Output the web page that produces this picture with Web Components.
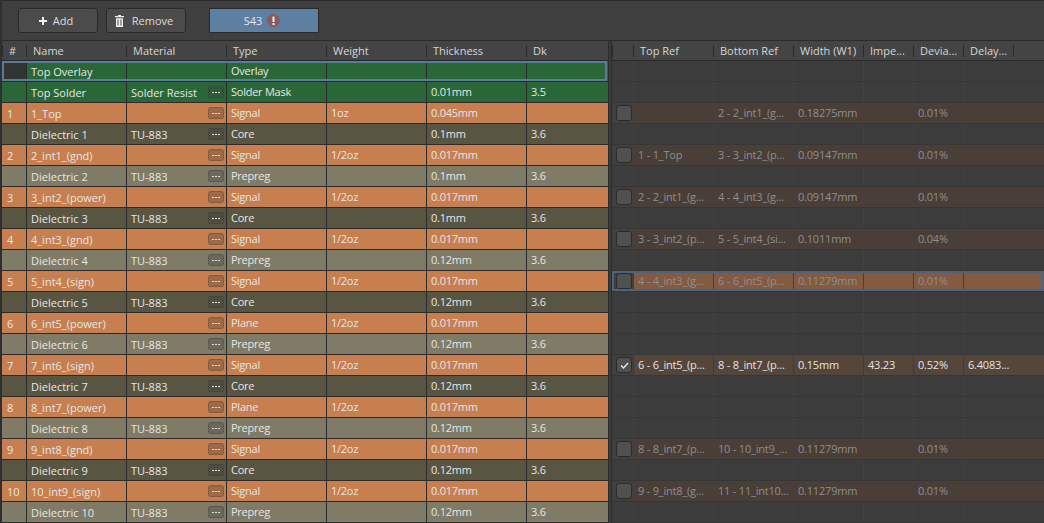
<!DOCTYPE html>
<html>
<head>
<meta charset="utf-8">
<style>
	html, body { margin: 0; height: 100%; background: #3c3c3c; overflow: hidden; }
	body { font: 11px "Open Sans", "Liberation Sans", sans-serif; color: #e4e4e4; }
</style>
</head>
<body>
<stack-app></stack-app>
<script>
const LEFT_COLS = '24px 100px 100px 100px 100px 100px 82px'
const RIGHT_HEAD_COLS = '21px 80px 80px 70px 50px 50px 50px 1fr'
const RIGHT_COLS = '21px 80px 80px 70px 50px 50px 1fr'

const LAYERS = [
	{kind: 'green', sel: true, cells: ['', 'Top Overlay', '', 'Overlay', '', '', '']},
	{kind: 'green', cells: ['', 'Top Solder', 'Solder Resist', 'Solder Mask', '', '0.01mm', '3.5'], more: true},
	{kind: 'copper', cells: ['1', '1_Top', '', 'Signal', '1oz', '0.045mm', ''], more: true},
	{kind: 'core', cells: ['', 'Dielectric 1', 'TU-883', 'Core', '', '0.1mm', '3.6'], more: true},
	{kind: 'copper', cells: ['2', '2_int1_(gnd)', '', 'Signal', '1/2oz', '0.017mm', ''], more: true},
	{kind: 'prepreg', cells: ['', 'Dielectric 2', 'TU-883', 'Prepreg', '', '0.1mm', '3.6'], more: true},
	{kind: 'copper', cells: ['3', '3_int2_(power)', '', 'Signal', '1/2oz', '0.017mm', ''], more: true},
	{kind: 'core', cells: ['', 'Dielectric 3', 'TU-883', 'Core', '', '0.1mm', '3.6'], more: true},
	{kind: 'copper', cells: ['4', '4_int3_(gnd)', '', 'Signal', '1/2oz', '0.017mm', ''], more: true},
	{kind: 'prepreg', cells: ['', 'Dielectric 4', 'TU-883', 'Prepreg', '', '0.12mm', '3.6'], more: true},
	{kind: 'copper', cells: ['5', '5_int4_(sign)', '', 'Signal', '1/2oz', '0.017mm', ''], more: true},
	{kind: 'core', cells: ['', 'Dielectric 5', 'TU-883', 'Core', '', '0.12mm', '3.6'], more: true},
	{kind: 'copper', cells: ['6', '6_int5_(power)', '', 'Plane', '1/2oz', '0.017mm', ''], more: true},
	{kind: 'prepreg', cells: ['', 'Dielectric 6', 'TU-883', 'Prepreg', '', '0.12mm', '3.6'], more: true},
	{kind: 'copper', cells: ['7', '7_int6_(sign)', '', 'Signal', '1/2oz', '0.017mm', ''], more: true},
	{kind: 'core', cells: ['', 'Dielectric 7', 'TU-883', 'Core', '', '0.12mm', '3.6'], more: true},
	{kind: 'copper', cells: ['8', '8_int7_(power)', '', 'Plane', '1/2oz', '0.017mm', ''], more: true},
	{kind: 'prepreg', cells: ['', 'Dielectric 8', 'TU-883', 'Prepreg', '', '0.12mm', '3.6'], more: true},
	{kind: 'copper', cells: ['9', '9_int8_(gnd)', '', 'Signal', '1/2oz', '0.017mm', ''], more: true},
	{kind: 'core', cells: ['', 'Dielectric 9', 'TU-883', 'Core', '', '0.12mm', '3.6'], more: true},
	{kind: 'copper', cells: ['10', '10_int9_(sign)', '', 'Signal', '1/2oz', '0.017mm', ''], more: true},
	{kind: 'prepreg', cells: ['', 'Dielectric 10', 'TU-883', 'Prepreg', '', '0.12mm', '3.6'], more: true}
]

// index into LAYERS -> via row on the right side
const VIAS = {
	2: ['', '2 - 2_int1_(g...', '0.18275mm', '', '0.01%', ''],
	4: ['1 - 1_Top', '3 - 3_int2_(p...', '0.09147mm', '', '0.01%', ''],
	6: ['2 - 2_int1_(g...', '4 - 4_int3_(g...', '0.09147mm', '', '0.01%', ''],
	8: ['3 - 3_int2_(p...', '5 - 5_int4_(si...', '0.1011mm', '', '0.04%', ''],
	10: ['4 - 4_int3_(g...', '6 - 6_int5_(p...', '0.11279mm', '', '0.01%', ''],
	14: ['6 - 6_int5_(p...', '8 - 8_int7_(p...', '0.15mm', '43.23', '0.52%', '6.4083...'],
	18: ['8 - 8_int7_(p...', '10 - 10_int9_...', '0.11279mm', '', '0.01%', ''],
	20: ['9 - 9_int8_(g...', '11 - 11_int10...', '0.11279mm', '', '0.01%', '']
}

class ToolButton extends HTMLElement {
	constructor() {
		super()
		const root = this.attachShadow({mode: 'open'})
		root.innerHTML = `<style>
			:host {
				display: flex;
				align-items: center;
				justify-content: center;
				gap: var(--icon-gap, 6px);
				box-sizing: border-box;
				width: 80px;
				height: 25px;
				padding-right: 4px;
				background: #4b4b4b;
				border: 1px solid #292929;
				border-radius: 3px;
				color: #dcdcdc;
			}
			::slotted(svg) { display: block; }
		</style><slot name="icon"></slot><slot></slot>`
	}
}

class StackTab extends HTMLElement {
	constructor() {
		super()
		const root = this.attachShadow({mode: 'open'})
		root.innerHTML = `<style>
			:host {
				display: flex;
				align-items: center;
				justify-content: center;
				gap: 5px;
				box-sizing: border-box;
				width: 110px;
				height: 25px;
				padding-right: 4px;
				background: #5d7fa2;
				border: 1px solid #2a2a2a;
				color: #e6e6e6;
			}
			svg { display: block; }
		</style><slot></slot>
		<svg width="13" height="13" viewBox="0 0 13 13">
			<circle cx="6.5" cy="6.5" r="6.5" fill="#8b5a5c"/>
			<rect x="5.5" y="2.5" width="2" height="5.5" rx=".5" fill="#f2f2f2"/>
			<rect x="5.5" y="9" width="2" height="2" fill="#f2f2f2"/>
		</svg>`
	}
}

class StackToolbar extends HTMLElement {
	constructor() {
		super()
		const root = this.attachShadow({mode: 'open'})
		root.innerHTML = `<style>
			:host {
				display: flex;
				align-items: center;
				box-sizing: border-box;
				height: 41px;
				padding: 0 0 0 16px;
				gap: 8px;
				background: #3f3f3f;
				border-top: 1px solid #2b2b2b;
				border-bottom: 1px solid #2b2b2b;
			}
			stack-tab { margin-left: 15px; }
		</style>
		<tool-button>
			<svg slot="icon" width="8" height="8" viewBox="0 0 8 8"><path d="M3 0h2v3h3v2H5v3H3V5H0V3h3z" fill="#f0f0f0"/></svg>
			Add
		</tool-button>
		<tool-button style="--icon-gap: 8px">
			<svg slot="icon" width="9" height="12" viewBox="0 0 9 12"><path d="M3 0h3v1h3v1.200H0V1h3z" fill="#f0f0f0"/><path d="M1 3.200h7V12H1zM2.500 4.500v6h1v-6zM5.500 4.500v6h1v-6z" fill="#f0f0f0" fill-rule="evenodd"/></svg>
			Remove
		</tool-button>
		<stack-tab>S43</stack-tab>`
	}
}

class HeaderRow extends HTMLElement {
	constructor() {
		super()
		const root = this.attachShadow({mode: 'open'})
		const labels = (this.getAttribute('labels') || '').split('|')
		root.innerHTML = `<style>
			:host {
				display: grid;
				grid-template-columns: ${this.getAttribute('cols')};
				box-sizing: border-box;
				height: 20px;
				background: #444444;
				border-bottom: 1px solid #2b2b2b;
				color: #d6d6d6;
			}
			div {
				display: flex;
				align-items: center;
				padding-left: 7px;
				white-space: nowrap;
				overflow: hidden;
				background: linear-gradient(#2b2b2b, #2b2b2b) 0 4px / 1px 12px no-repeat;
			}
			div:first-child { background: none; padding-left: 6px; }
		</style>${labels.map(l => `<div>${l}</div>`).join('')}`
	}
}

class MoreButton extends HTMLElement {
	constructor() {
		super()
		const root = this.attachShadow({mode: 'open'})
		root.innerHTML = `<style>
			:host {
				position: absolute;
				right: 2px;
				top: 4px;
				display: flex;
				align-items: center;
				justify-content: center;
				gap: 1px;
				box-sizing: border-box;
				width: 16px;
				height: 12px;
				background: rgba(60, 60, 60, .3);
				border: 1px solid rgba(40, 40, 40, .22);
				border-radius: 3px;
			}
			i { width: 2px; height: 1px; background: #dedede; }
		</style><i></i><i></i><i></i>`
	}
}

const ROW_BG = {green: '#2a6738', copper: '#c77f50', core: '#585543', prepreg: '#7f7b67'}

class LayerRow extends HTMLElement {
	set data(layer) {
		const root = this.shadowRoot || this.attachShadow({mode: 'open'})
		const cells = layer.cells.map((text, i) => {
			const more = i === 2 && layer.more ? '<more-button></more-button>' : ''
			return `<div class="c${i}">${text}${more}</div>`
		}).join('')
		root.innerHTML = `<style>
			:host {
				display: grid;
				position: relative;
				grid-template-columns: ${LEFT_COLS};
				box-sizing: border-box;
				height: 21px;
				background: ${ROW_BG[layer.kind]};
				border-bottom: 1px solid #2b2b2b;
				color: #e6e6e6;
			}
			div {
				position: relative;
				display: flex;
				align-items: center;
				padding: 0 0 1px 4px;
				white-space: nowrap;
				border-left: 1px solid #2b2b2b;
				box-sizing: border-box;
				letter-spacing: -.25px;
			}
			.c0 { border-left: 0; }
			.c1, .c2, .c0 { padding: 1px 0 0 4px; letter-spacing: 0; }
			.c0 { padding-left: 5px; }
			.outline {
				position: absolute;
				inset: 0 1px 0 0;
				border: 2px solid #5b7a9c;
				padding: 0;
				pointer-events: none;
			}
			.c0.dark { background: #333333; }
		</style>${cells.replace('class="c0"', layer.sel ? 'class="c0 dark"' : 'class="c0"')}${layer.sel ? '<div class="outline"></div>' : ''}`
	}
}

class CheckBox extends HTMLElement {
	constructor() {
		super()
		const root = this.attachShadow({mode: 'open'})
		const tick = this.hasAttribute('checked')
			? '<svg width="9" height="7" viewBox="0 0 9 7"><path d="M1 3.500l2.500 2.500 4.500-5" fill="none" stroke="#e8e8e8" stroke-width="1.300"/></svg>'
			: ''
		root.innerHTML = `<style>
			:host {
				display: flex;
				align-items: center;
				justify-content: center;
				box-sizing: border-box;
				width: 16px;
				height: 16px;
				background: #505050;
				border: 1px solid #2b2b2b;
				border-radius: 3px;
			}
		</style>${tick}`
	}
}

class ViaRow extends HTMLElement {
	connectedCallback() {
		const root = this.shadowRoot || this.attachShadow({mode: 'open'})
		const via = this.via
		const checked = this.hasAttribute('checked')
		const selected = this.hasAttribute('selected')
		const cells = (via || ['', '', '', '', '', '']).map(t => `<div>${t}</div>`).join('')
		const bg = !via ? 'transparent' : checked ? '#54463a' : selected ? '#825b42' : '#493e38'
		root.innerHTML = `<style>
			:host {
				display: grid;
				position: relative;
				grid-template-columns: ${RIGHT_COLS};
				box-sizing: border-box;
				height: 21px;
				background: ${bg};
				border-bottom: 1px solid #363636;
				color: ${checked ? '#e4e4e4' : '#8f8f8f'};
			}
			div, span {
				display: flex;
				align-items: center;
				box-sizing: border-box;
				white-space: nowrap;
				overflow: hidden;
				letter-spacing: -.2px;
			}
			div { padding: 0 0 1px 4px; border-left: 1px solid ${checked ? '#3c3c3c' : '#414141'}; }
			span { padding-left: 4px; background: ${via ? '#423f3c' : 'transparent'}; }
			.outline {
				position: absolute;
				inset: 0;
				border: 2px solid #4a6480;
				padding: 0;
			}
		</style>
		<span>${via ? `<check-box ${checked ? 'checked' : ''}></check-box>` : ''}</span>
		${cells}
		${selected ? '<div class="outline"></div>' : ''}`
	}
}

class LayerTable extends HTMLElement {
	constructor() {
		super()
		const root = this.attachShadow({mode: 'open'})
		root.innerHTML = `<style>
			:host {
				display: block;
				width: 606px;
				flex: none;
				overflow: hidden;
			}
		</style>
		<header-row cols="${LEFT_COLS}" labels="#|Name|Material|Type|Weight|Thickness|Dk"></header-row>`
		LAYERS.forEach(layer => {
			const row = document.createElement('layer-row')
			row.data = layer
			root.appendChild(row)
		})
	}
}

class ViaTable extends HTMLElement {
	constructor() {
		super()
		const root = this.attachShadow({mode: 'open'})
		root.innerHTML = `<style>
			:host {
				display: block;
				flex: 1;
				min-width: 0;
				overflow: hidden;
			}
		</style>
		<header-row cols="${RIGHT_HEAD_COLS}" labels="|Top Ref|Bottom Ref|Width (W1)|Impe...|Devia...|Delay...|"></header-row>`
		LAYERS.forEach((layer, i) => {
			const row = document.createElement('via-row')
			row.via = VIAS[i]
			if (i === 10) row.setAttribute('selected', '')
			if (i === 14) row.setAttribute('checked', '')
			root.appendChild(row)
		})
	}
}

class StackApp extends HTMLElement {
	constructor() {
		super()
		const root = this.attachShadow({mode: 'open'})
		root.innerHTML = `<style>
			:host {
				display: flex;
				flex-direction: column;
				height: 523px;
				box-sizing: border-box;
				border-left: 2px solid #2f2f2f;
				overflow: hidden;
			}
			.body { display: flex; flex: 1; min-height: 0; }
			.split {
				flex: none;
				width: 4px;
				background: #3c3c3c;
				border-left: 1px solid #2b2b2b;
				border-right: 1px solid #2b2b2b;
				box-sizing: border-box;
			}
		</style>
		<stack-toolbar></stack-toolbar>
		<div class="body">
			<layer-table></layer-table>
			<div class="split"></div>
			<via-table></via-table>
		</div>`
	}
}

customElements.define('tool-button', ToolButton)
customElements.define('stack-tab', StackTab)
customElements.define('stack-toolbar', StackToolbar)
customElements.define('header-row', HeaderRow)
customElements.define('more-button', MoreButton)
customElements.define('layer-row', LayerRow)
customElements.define('check-box', CheckBox)
customElements.define('via-row', ViaRow)
customElements.define('layer-table', LayerTable)
customElements.define('via-table', ViaTable)
customElements.define('stack-app', StackApp)
</script>
</body>
</html>
